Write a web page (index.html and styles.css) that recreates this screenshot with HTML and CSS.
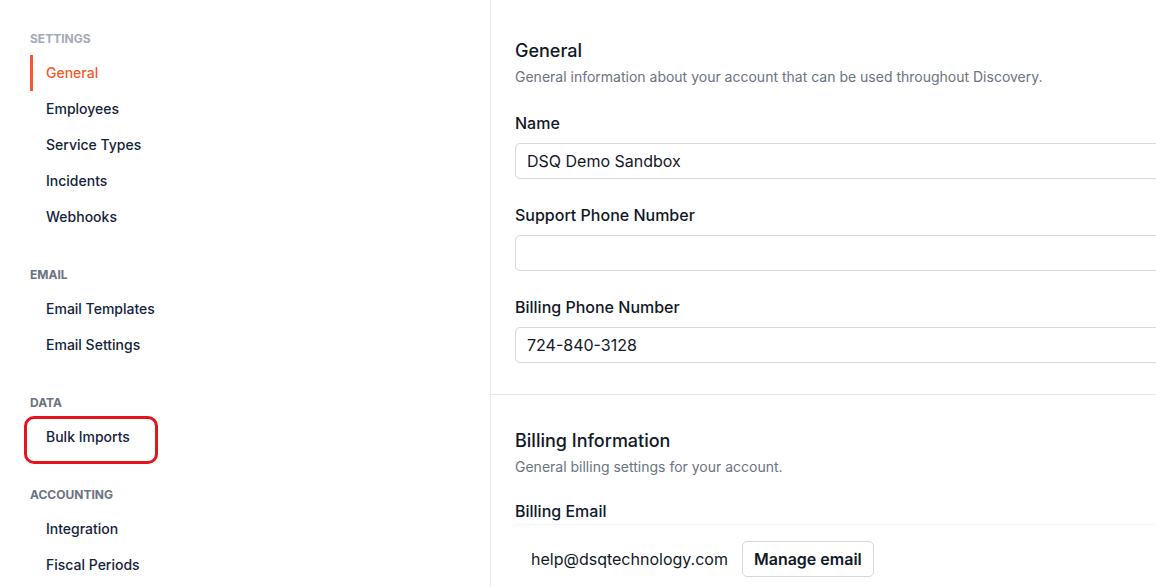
FILE: index.html
```html
<!DOCTYPE html>
<html>

<head>
    <meta charset="utf-8" />
    <title>Settings - General</title>
    <meta name="viewport" content="width=device-width, initial-scale=1.0">
    <link rel="stylesheet" href="styles.css">
</head>

<body>
    <div class="page">
        <!-- Left settings menu -->
        <div class="side-menu">
            <div class="menu-section">
                <div class="menu-heading light">Settings</div>
                <div class="menu-item active">General</div>
                <div class="menu-item">Employees</div>
                <div class="menu-item">Service Types</div>
                <div class="menu-item">Incidents</div>
                <div class="menu-item">Webhooks</div>
            </div>
            <div class="menu-section">
                <div class="menu-heading">Email</div>
                <div class="menu-item">Email Templates</div>
                <div class="menu-item">Email Settings</div>
            </div>
            <div class="menu-section">
                <div class="menu-heading">Data</div>
                <div class="menu-item circled">Bulk Imports</div>
            </div>
            <div class="menu-section">
                <div class="menu-heading">Accounting</div>
                <div class="menu-item">Integration</div>
                <div class="menu-item">Fiscal Periods</div>
            </div>
        </div>

        <!-- Main content -->
        <div class="content">
            <div class="panel">
                <div class="panel-title">General</div>
                <div class="panel-desc">General information about your account that can be used throughout Discovery.</div>

                <div class="field">
                    <div class="field-label">Name</div>
                    <div class="text-input">DSQ Demo Sandbox</div>
                </div>
                <div class="field">
                    <div class="field-label">Support Phone Number</div>
                    <div class="text-input"></div>
                </div>
                <div class="field">
                    <div class="field-label">Billing Phone Number</div>
                    <div class="text-input">724-840-3128</div>
                </div>
            </div>

            <div class="panel billing">
                <div class="panel-title">Billing Information</div>
                <div class="panel-desc">General billing settings for your account.</div>

                <div class="field-label email-label">Billing Email</div>
                <div class="email-row">
                    <span class="email-value">help@dsqtechnology.com</span>
                    <span class="button">Manage email</span>
                </div>
            </div>
        </div>
    </div>
</body>

</html>
```

FILE: styles.css
```css
* {
    font-family: 'Inter', 'Noto Sans', sans-serif;
    padding: 0;
    margin: 0;
    box-sizing: border-box;
}

body {
    background-color: white;
    overflow: hidden;
}

.page {
    display: flex;
    width: 1400px;
}

/* side menu */

.side-menu {
    width: 491px;
    flex-shrink: 0;
    padding: 30px 0 0 30px;
    border-right: 1px solid #e5e7eb;
    min-height: 587px;
}

.menu-section {
    margin-bottom: 31px;
}

.menu-heading {
    font-size: 12px;
    line-height: 17px;
    font-weight: 700;
    text-transform: uppercase;
    color: #6b7280;
    margin-bottom: 8px;
}

.menu-heading.light {
    color: #a3aab5;
}

.menu-item {
    position: relative;
    height: 36px;
    line-height: 36px;
    font-size: 14px;
    font-weight: 500;
    color: #14233a;
    padding-left: 16px;
}

.active {
    color: #f5592b;
    border-left: 3px solid #f5592b;
    padding-left: 13px;
}

/* red mark drawn over the menu */
.circled::after {
    content: "";
    position: absolute;
    left: -6px;
    top: -3px;
    width: 128px;
    height: 42px;
    border: 3px solid #e3141e;
    border-radius: 10px;
}

/* main content */

.content {
    width: 760px;
}

.panel {
    padding: 39px 0 31px 24px;
    border-bottom: 1px solid #e5e7eb;
}

.panel.billing {
    padding-top: 34px;
    border-bottom: none;
}

.panel-title {
    font-size: 18px;
    line-height: 24px;
    font-weight: 500;
    color: #111827;
    margin-bottom: 4px;
}

.panel-desc {
    font-size: 14px;
    line-height: 20px;
    color: #6b7280;
}

.field {
    margin-top: 25px;
}

.field-label {
    font-size: 16px;
    line-height: 22px;
    font-weight: 500;
    color: #111827;
    margin-bottom: 9px;
}

.text-input {
    height: 36px;
    line-height: 34px;
    border: 1px solid #d4d7dd;
    border-radius: 5px;
    padding-left: 11px;
    font-size: 16px;
    color: #111827;
}

.email-label {
    margin-top: 23px;
    margin-bottom: 0;
    padding-bottom: 2px;
    border-bottom: 1px solid #f3f4f6;
}

.email-row {
    display: flex;
    align-items: center;
    margin-top: 16px;
    padding-left: 16px;
}

.email-value {
    font-size: 16px;
    color: #111827;
    margin-right: 14px;
}

.button {
    height: 36px;
    line-height: 34px;
    padding: 0 11px;
    border: 1px solid #d4d7dd;
    border-radius: 5px;
    font-size: 16px;
    font-weight: 600;
    color: #111827;
}
```
